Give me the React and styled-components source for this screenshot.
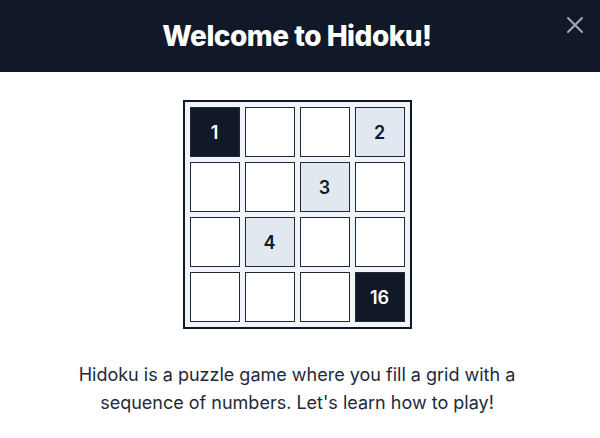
import React from "react";
import styled, { createGlobalStyle } from "styled-components";

const Global = createGlobalStyle`
  html, body { margin: 0; padding: 0; background: #ffffff; }
  body { font-family: Inter, "Liberation Sans", sans-serif; }
`;

const Modal = styled.div`
  width: 600px;
  height: 438px;
  background: #ffffff;
  overflow: hidden;
`;

const Header = styled.header`
  position: relative;
  height: 72px;
  padding-right: 6px;
  background: #111827;
  display: flex;
  align-items: center;
  justify-content: center;
`;

const Title = styled.h1`
  margin: 0;
  color: #ffffff;
  font-family: Inter, "Liberation Sans", sans-serif;
  font-size: 28px;
  font-weight: 800;
  letter-spacing: -0.5px;
`;

const Close = styled.button`
  position: absolute;
  top: 14px;
  right: 14px;
  width: 22px;
  height: 22px;
  padding: 0;
  border: none;
  background: transparent;
  color: #a3aab5;
  display: flex;
  align-items: center;
  justify-content: center;
  cursor: pointer;
`;

const Body = styled.main`
  display: flex;
  flex-direction: column;
  align-items: center;
  padding: 28px 6px 0 0;
`;

const Board = styled.div`
  display: grid;
  grid-template-columns: repeat(4, 50px);
  grid-auto-rows: 50px;
  gap: 5px;
  padding: 5px;
  background: #f1f5f9;
  border: 2px solid #111827;
`;

const palette = {
  dark: { bg: "#111827", fg: "#ffffff" },
  hint: { bg: "#e2e8f0", fg: "#111827" },
  empty: { bg: "#ffffff", fg: "#111827" },
};

const Cell = styled.div`
  box-sizing: border-box;
  border: 1.5px solid #1f2937;
  background: ${(p) => palette[p.$kind].bg};
  color: ${(p) => palette[p.$kind].fg};
  display: flex;
  align-items: center;
  justify-content: center;
  font-family: Inter, "Liberation Sans", sans-serif;
  font-size: 18px;
  font-weight: 600;
`;

const Intro = styled.p`
  margin: 32px 0 0;
  width: 470px;
  text-align: center;
  color: #1e293b;
  font-family: Inter, "Liberation Sans", sans-serif;
  font-size: 18px;
  line-height: 28px;
`;

const cells = [
  ["1", "dark"], ["", "empty"], ["", "empty"], ["2", "hint"],
  ["", "empty"], ["", "empty"], ["3", "hint"], ["", "empty"],
  ["", "empty"], ["4", "hint"], ["", "empty"], ["", "empty"],
  ["", "empty"], ["", "empty"], ["", "empty"], ["16", "dark"],
];

export default function App() {
  return (
    <Modal>
      <Global />
      <Header>
        <Title>Welcome to Hidoku!</Title>
        <Close aria-label="Close">
          <svg width="20" height="20" viewBox="0 0 20 20" fill="none" stroke="currentColor" strokeWidth="2" strokeLinecap="round">
            <path d="M3 3l14 14M17 3L3 17" />
          </svg>
        </Close>
      </Header>
      <Body>
        <Board>
          {cells.map(([n, kind], i) => (
            <Cell key={i} $kind={kind}>{n}</Cell>
          ))}
        </Board>
        <Intro>
          Hidoku is a puzzle game where you fill a grid with a sequence of numbers. Let's learn how to play!
        </Intro>
      </Body>
    </Modal>
  );
}
